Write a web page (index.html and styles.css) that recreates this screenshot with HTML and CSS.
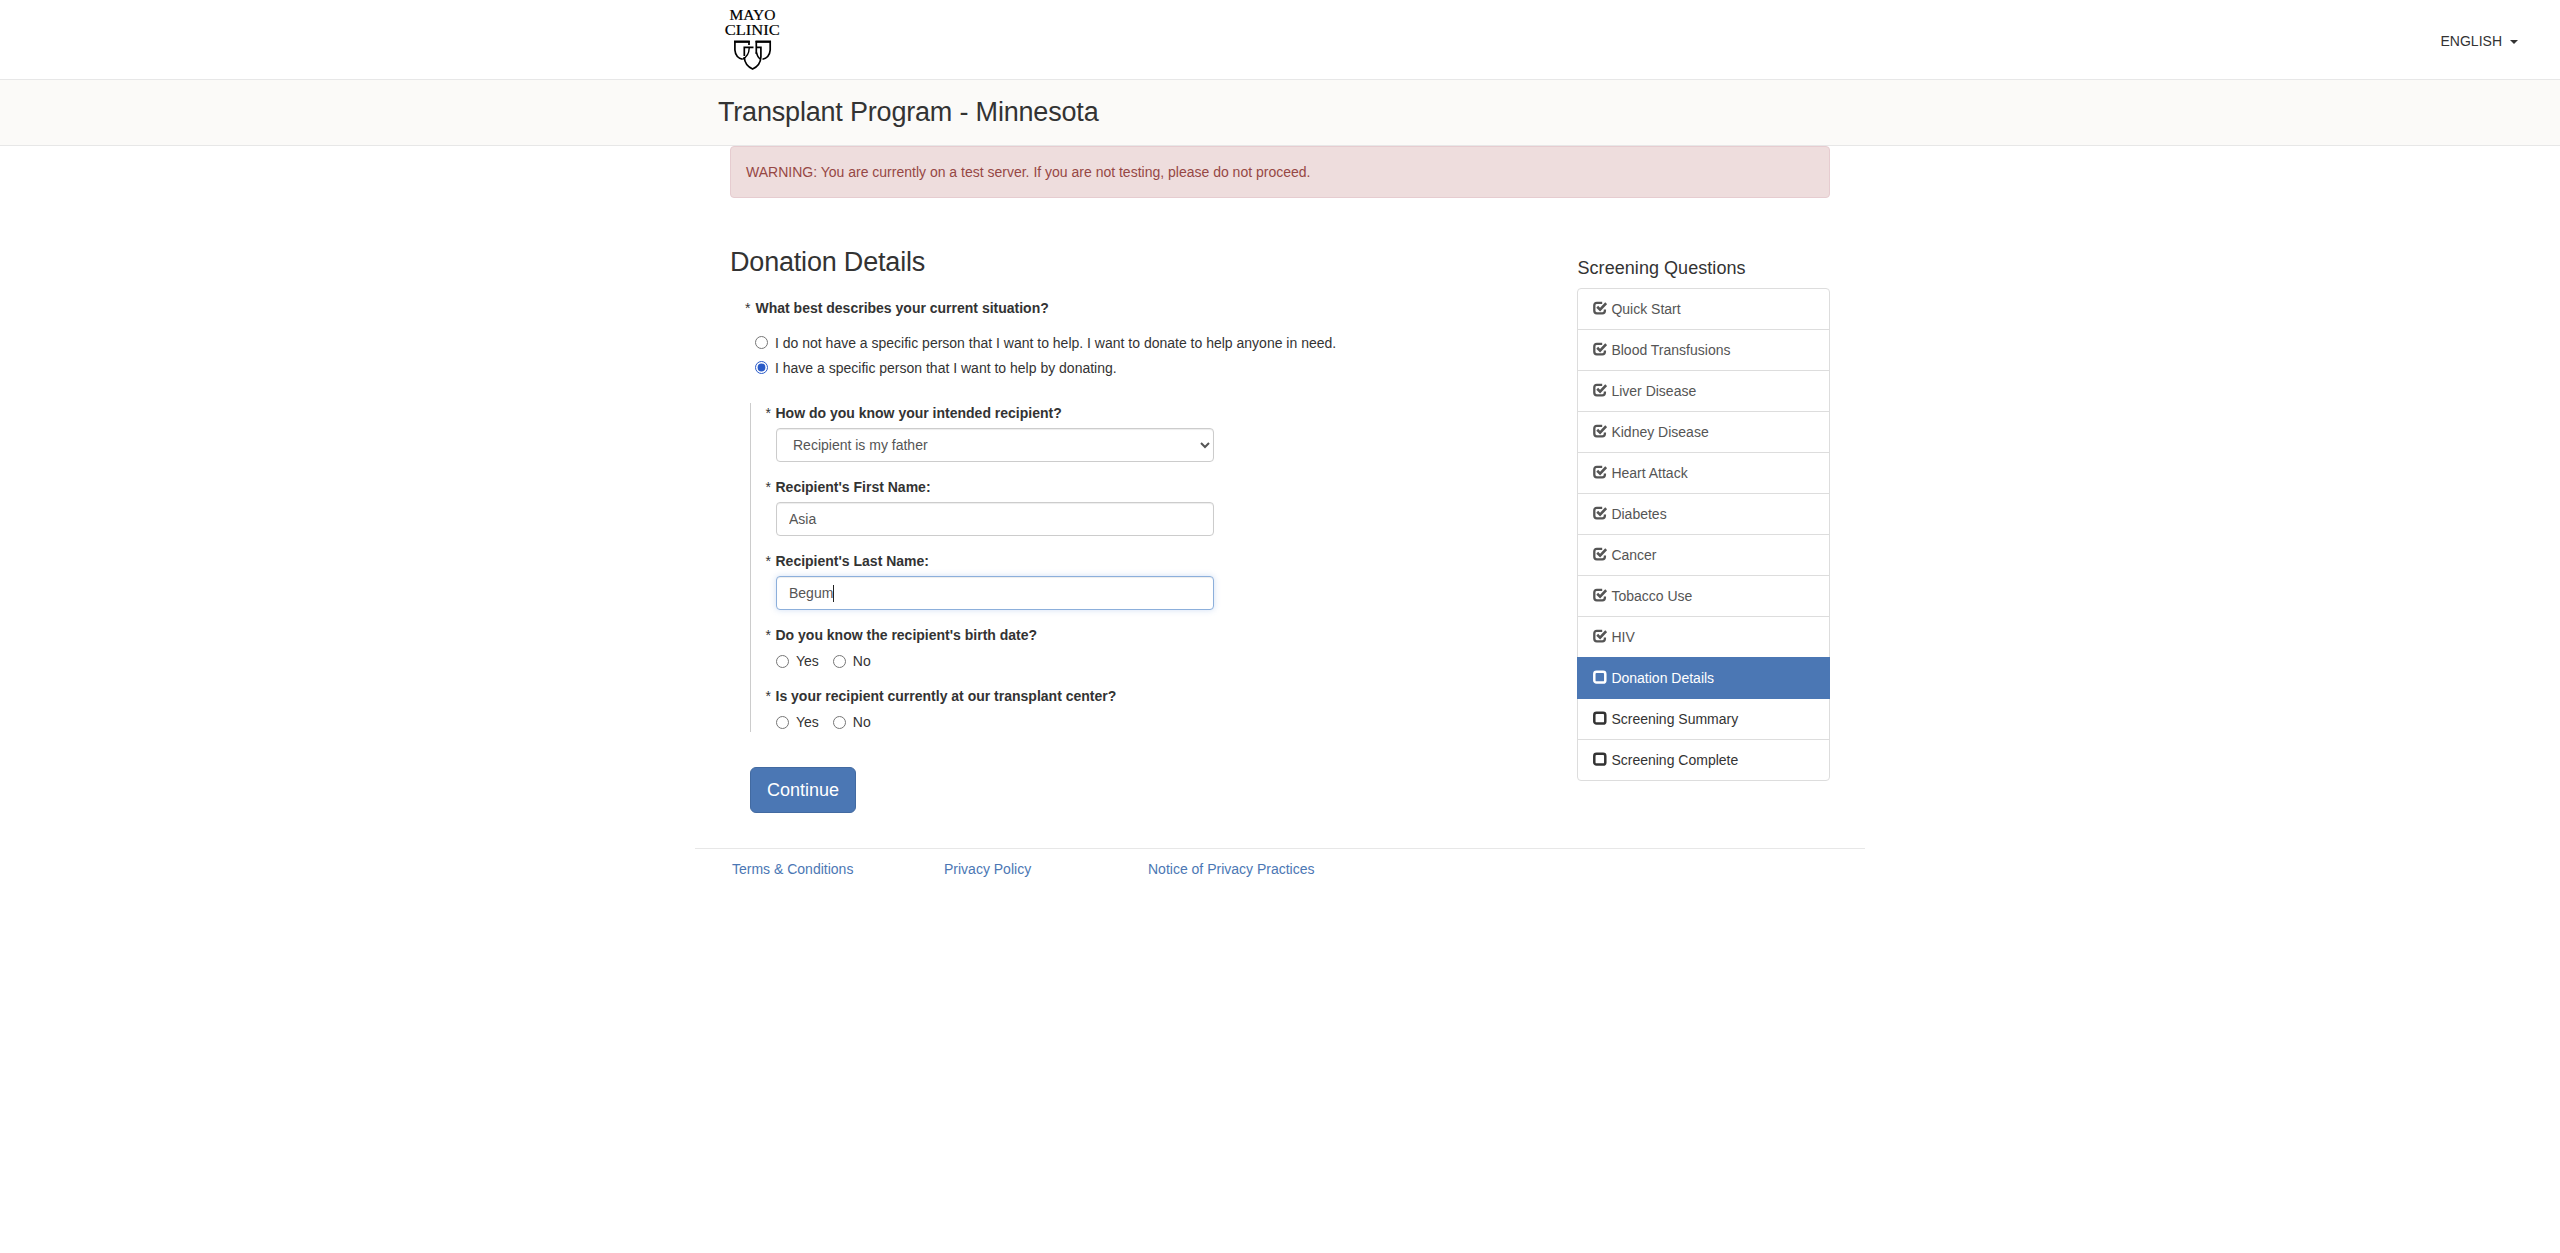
FILE: index.html
```html
<!DOCTYPE html>
<html lang="en">
<head>
<meta charset="utf-8">
<title>Donation Details</title>
<link rel="stylesheet" href="styles.css">
</head>
<body>
<svg class="sprite" aria-hidden="true">
  <symbol id="check" viewBox="0 0 14 14">
    <path d="M9.2 1.9H3.8Q1.3 1.9 1.3 4.4V9.8Q1.3 12.3 3.8 12.3H9.4Q11.9 12.3 11.9 9.8V8.4" fill="none" stroke="currentColor" stroke-width="2.3"/>
    <path d="M4.2 5.8L7.1 8.6L13.2 2.2" fill="none" stroke="currentColor" stroke-width="2.7"/>
  </symbol>
  <symbol id="box" viewBox="0 0 14 14">
    <rect x="1.3" y="1.8" width="11" height="10.8" rx="2.2" fill="none" stroke="currentColor" stroke-width="2.5"/>
  </symbol>
</svg>
<header class="topbar">
  <div class="container topbar-inner">
    <svg class="logo" viewBox="0 0 60 70" role="img" aria-label="Mayo Clinic">
      <g class="logo-text">
        <text x="4.5" y="20.3" textLength="46" lengthAdjust="spacingAndGlyphs">MAYO</text>
        <text x="-.3" y="34.8" textLength="55" lengthAdjust="spacingAndGlyphs">CLINIC</text>
      </g>
      <g fill="none" stroke="#000" stroke-width="1.7">
        <path d="M24 45V41.8H9.9V50Q10.5 57.5 17.5 59.3"/>
        <path d="M31.3 54V41.8H45.2V50Q44.6 57.5 37.5 59.3"/>
        <path d="M24.2 48Q24 56 17.5 59.3M31.3 52Q32.5 57 35 59" stroke-width="1.4"/>
        <path d="M19.3 56V47.3H28.5M31 47.3H35.9V57Q35.5 65.5 27.6 69Q19.8 65.5 19.2 57"/>
        <path d="M9 41.5H24.8M30.5 41.5H46" stroke-width="2"/>
      </g>
    </svg>
  </div>
  <a class="language">ENGLISH <span class="caret"></span></a>
</header>
<div class="band"><h1 class="program">Transplant Program - Minnesota</h1></div>
<main class="container">
  <div class="page">
    <div class="alert">WARNING: You are currently on a test server. If you are not testing, please do not proceed.</div>
    <div class="columns">
      <form class="details">
        <h2 class="title">Donation Details</h2>
        <div class="question"><span class="star">*</span><b>What best describes your current situation?</b></div>
        <div class="situation">
          <label class="choice"><input type="radio" name="s">I do not have a specific person that I want to help. I want to donate to help anyone in need.</label>
          <label class="choice"><input type="radio" name="s" checked>I have a specific person that I want to help by donating.</label>
        </div>
        <div class="recipient">
          <div class="group">
            <div class="question"><span class="star">*</span><b>How do you know your intended recipient?</b></div>
            <select class="control"><option>Recipient is my father</option></select>
          </div>
          <div class="group">
            <div class="question"><span class="star">*</span><b>Recipient's First Name:</b></div>
            <input class="control" type="text" value="Asia">
          </div>
          <div class="group">
            <div class="question"><span class="star">*</span><b>Recipient's Last Name:</b></div>
            <div class="control focused">Begum<span class="cursor"></span></div>
          </div>
          <div class="group">
            <div class="question"><span class="star">*</span><b>Do you know the recipient's birth date?</b></div>
            <div class="inline"><label class="choice"><input type="radio" name="b">Yes</label><label class="choice"><input type="radio" name="b">No</label></div>
          </div>
          <div class="group">
            <div class="question"><span class="star">*</span><b>Is your recipient currently at our transplant center?</b></div>
            <div class="inline"><label class="choice"><input type="radio" name="c">Yes</label><label class="choice"><input type="radio" name="c">No</label></div>
          </div>
        </div>
        <button class="continue" type="button">Continue</button>
      </form>
      <aside class="sidebar">
        <h4 class="sidebar-title">Screening Questions</h4>
        <ul class="steps">
          <li class="done"><svg class="icon"><use href="#check"/></svg>Quick Start</li>
          <li class="done"><svg class="icon"><use href="#check"/></svg>Blood Transfusions</li>
          <li class="done"><svg class="icon"><use href="#check"/></svg>Liver Disease</li>
          <li class="done"><svg class="icon"><use href="#check"/></svg>Kidney Disease</li>
          <li class="done"><svg class="icon"><use href="#check"/></svg>Heart Attack</li>
          <li class="done"><svg class="icon"><use href="#check"/></svg>Diabetes</li>
          <li class="done"><svg class="icon"><use href="#check"/></svg>Cancer</li>
          <li class="done"><svg class="icon"><use href="#check"/></svg>Tobacco Use</li>
          <li class="done"><svg class="icon"><use href="#check"/></svg>HIV</li>
          <li class="active"><svg class="icon"><use href="#box"/></svg>Donation Details</li>
          <li><svg class="icon"><use href="#box"/></svg>Screening Summary</li>
          <li><svg class="icon"><use href="#box"/></svg>Screening Complete</li>
        </ul>
      </aside>
    </div>
  </div>
  <footer class="footer"><a>Terms &amp; Conditions</a><a>Privacy Policy</a><a>Notice of Privacy Practices</a></footer>
</main>
</body>
</html>
```
FILE: styles.css
```css
* { box-sizing: border-box; }
body { margin: 0; background: #fff; color: #333; font: 14px/20px "Liberation Sans", Arial, sans-serif; }
.sprite { display: none; }
.container { width: 1170px; margin: 0 auto; }
.topbar { height: 80px; border-bottom: 1px solid #e7e7e7; display: grid; grid-template-columns: 1fr 1170px 1fr; }
.topbar-inner { grid-column: 2; padding-left: 30px; }
.logo { display: block; width: 60px; height: 70px; overflow: visible; }
.logo-text { font: 15px "Liberation Serif", serif; fill: #000; stroke: #000; stroke-width: .2; }
.language { justify-self: end; display: flex; align-items: center; gap: 8px; padding: 31px 42px 0 0; height: 51px; }
.caret { border: 4px solid transparent; border-top-color: #333; border-bottom: 0; margin-top: 2px; }
.band { height: 66px; background: #fbfaf8; border-bottom: 1px solid #e7e7e7; }
.program { width: 1170px; margin: 0 auto; padding: 15px 0 0 23px; font-size: 27px; font-weight: 400; line-height: 34px; letter-spacing: -.19px; }
.page { padding: 0 35px; }
.alert { height: 52px; padding: 15px; border: 1px solid #e6ccd0; border-radius: 4px; background: #eedddd; color: #964744; }
.columns { display: flex; justify-content: space-between; height: 650px; }
.title { margin: 49px 0 0; font-size: 27px; font-weight: 400; line-height: 30px; letter-spacing: -.19px; }
.details > .question { margin: 21px 0 0 15px; }
.question { display: flex; }
.star { width: 10.5px; }
.situation { padding: 12px 0 0 25px; }
.choice { display: flex; align-items: center; height: 25px; gap: 7px; }
.choice input { width: 13px; height: 13px; margin: 0; accent-color: #2a5bc8; }
.recipient { margin: 23px 0 0 20px; border-left: 1px solid #ccc; padding-left: 25px; display: grid; gap: 15px; }
.recipient .question { margin: 0 0 5px -10.5px; }
.recipient .star { width: 10px; }
.control { display: block; width: 438px; height: 34px; padding: 6px 12px; border: 1px solid #ccc; border-radius: 4px; background: #fff; color: #555; font: inherit; box-shadow: inset 0 1px 1px rgba(0,0,0,.075); }
.focused { display: flex; border-color: #8cafdb; box-shadow: inset 0 1px 1px rgba(0,0,0,.075), 0 0 6px rgba(102,150,220,.3); }
.cursor { width: 1px; height: 17px; margin-top: 2px; background: #222; }
.inline { display: flex; gap: 14px; height: 21px; }
.inline .choice { height: 22px; }
.continue { display: block; width: 106px; height: 46px; margin: 35px 0 0 20px; padding: 0; border: 1px solid #426aa1; border-radius: 6px; background: #4b77b4; color: #fff; font: 18px/24px "Liberation Sans", Arial, sans-serif; }
.sidebar { width: 253px; padding-top: 60px; }
.sidebar-title { margin: 0 0 10px .5px; font-size: 18px; font-weight: 400; line-height: 20px; letter-spacing: .05px; }
.steps { list-style: none; margin: 0; padding: 0; }
.steps li { display: flex; gap: 4px; height: 42px; margin-bottom: -1px; padding: 10px 15px 10px 15.4px; border: 1px solid #ddd; }
.steps li:first-child { border-radius: 4px 4px 0 0; }
.steps li:last-child { border-radius: 0 0 4px 4px; }
.steps .done { color: #555; }
.steps .active { position: relative; background: #4b77b4; border-color: #4b77b4; color: #fff; }
.icon { width: 14px; height: 14px; margin-top: 2px; }
.footer { border-top: 1px solid #e7e7e7; padding: 10px 0 0 37px; display: grid; grid-template-columns: 212px 204px auto; color: #4b77b4; }
```
